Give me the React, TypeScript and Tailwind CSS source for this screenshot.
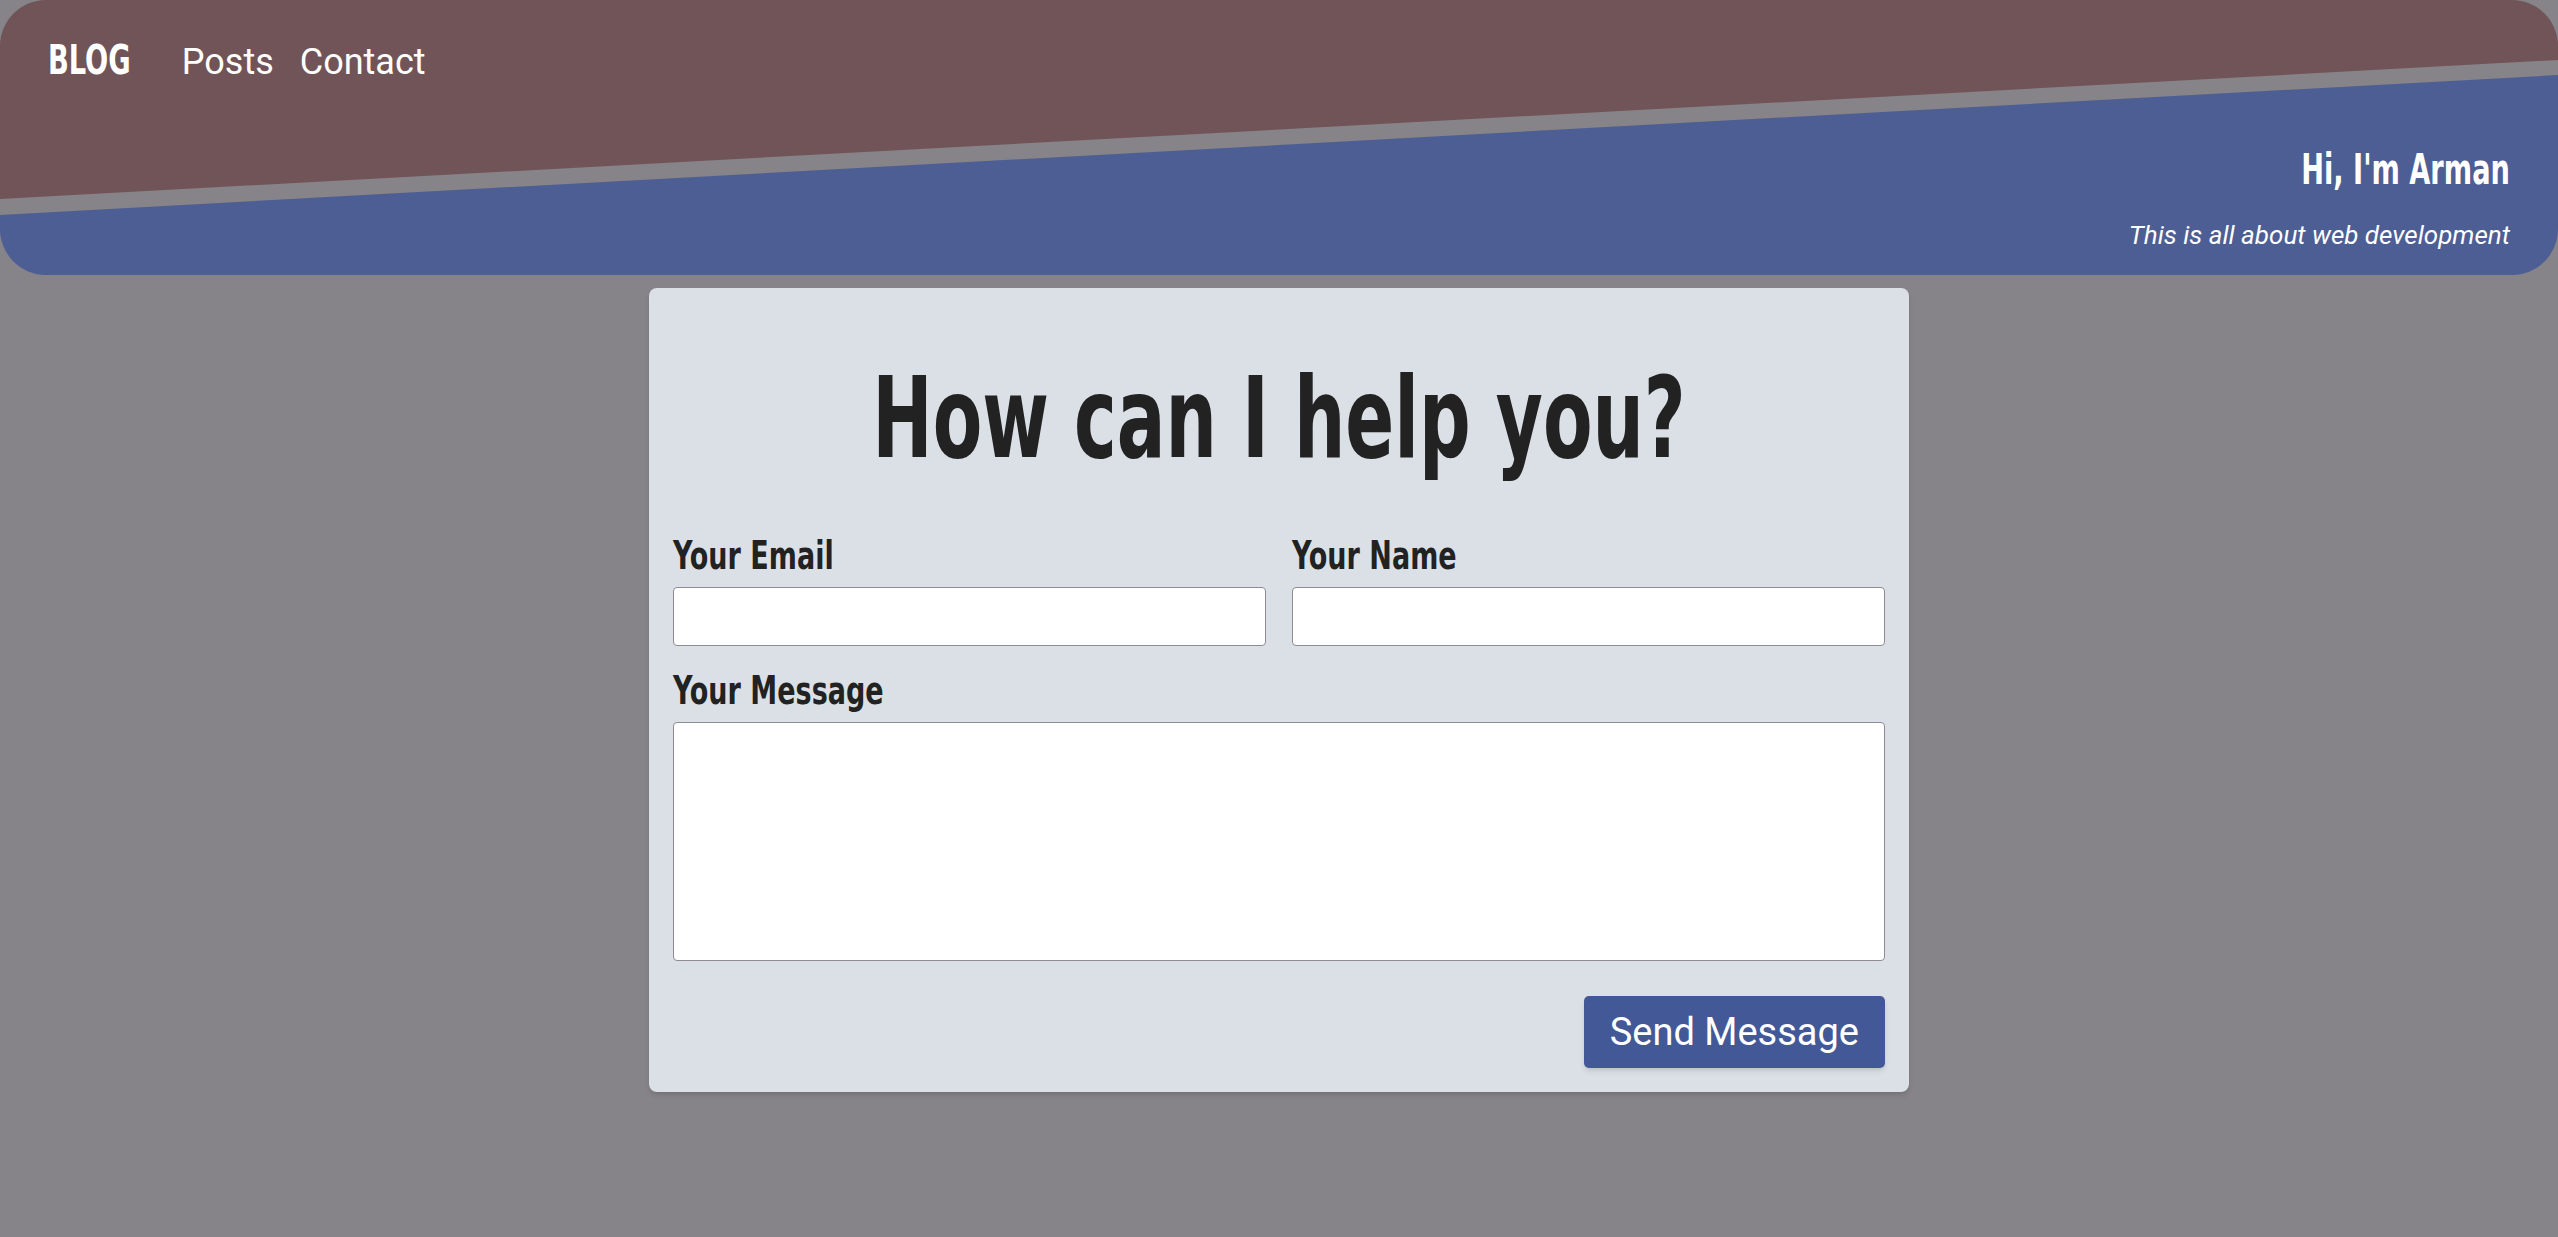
import React from "react";

// condensed display face (stand-in for a narrow bold sans)
const display = "font-['DejaVu_Sans_Condensed','DejaVu_Sans',sans-serif] font-bold";

function Header() {
  return (
    <header className="relative overflow-hidden rounded-[46px] bg-[#868389] font-['Roboto',sans-serif] text-white">
      <div className="absolute inset-0 bg-[#715457] [clip-path:polygon(0_0,100%_0,100%_60px,0_199px)]" />
      <div className="absolute inset-0 bg-[#4d5e94] [clip-path:polygon(0_215px,100%_75px,100%_100%,0_100%)]" />
      <div className="relative flex flex-col px-12 pt-[40px] pb-[27px]">
        <nav className="flex items-baseline">
          <a href="#" className={`${display} text-[41px] leading-none origin-left scale-x-[0.74] mr-[22px]`}>
            BLOG
          </a>
          <div className="flex items-baseline gap-[26px] text-[36px] leading-none">
            <a href="#">Posts</a>
            <a href="#">Contact</a>
          </div>
        </nav>
        <div className="mt-[68px] flex flex-col items-end">
          <h2 className={`${display} text-[42px] leading-none origin-right scale-x-[0.72]`}>Hi, I'm Arman</h2>
          <p className="mt-[31px] text-[26px] leading-none italic">This is all about web development</p>
        </div>
      </div>
    </header>
  );
}

function Field({ label, children }: { label: string; children: React.ReactNode }) {
  return (
    <label className="flex flex-col gap-3">
      <span className={`${display} text-[39px] leading-none text-[#222] origin-left scale-x-[0.77]`}>{label}</span>
      {children}
    </label>
  );
}

export default function App() {
  const [email, setEmail] = React.useState("");
  const [name, setName] = React.useState("");
  const [message, setMessage] = React.useState("");

  return (
    <div className="min-h-screen bg-[#868389]">
      <Header />
      <main className="w-[1260px] mx-auto mt-[13px] rounded-lg bg-[#dbe0e7] shadow-md px-6 pt-6 pb-6">
        <h1 className={`${display} text-center text-[113px] leading-none text-[#222] mt-[50px] scale-x-[0.71]`}>
          How can I help you?
        </h1>
        <form className="mt-[61px] flex flex-col" onSubmit={(e) => e.preventDefault()}>
          <div className="grid grid-cols-2 gap-[26px]">
            <Field label="Your Email">
              <input
                type="email"
                value={email}
                onChange={(e) => setEmail(e.target.value)}
                className="h-[59px] rounded bg-white border border-[#8e8b92] px-3 text-xl outline-none"
              />
            </Field>
            <Field label="Your Name">
              <input
                type="text"
                value={name}
                onChange={(e) => setName(e.target.value)}
                className="h-[59px] rounded bg-white border border-[#8e8b92] px-3 text-xl outline-none"
              />
            </Field>
          </div>
          <div className="mt-[25px]">
            <Field label="Your Message">
              <textarea
                value={message}
                onChange={(e) => setMessage(e.target.value)}
                className="h-[239px] resize-none rounded bg-white border border-[#8e8b92] p-3 text-xl outline-none"
              />
            </Field>
          </div>
          <div className="mt-[35px] flex justify-end">
            <button
              type="submit"
              className="rounded-[5px] bg-[#435897] px-[26px] py-[14px] font-['Roboto',sans-serif] text-[38px] leading-[44px] text-white shadow-md"
            >
              Send Message
            </button>
          </div>
        </form>
      </main>
    </div>
  );
}
